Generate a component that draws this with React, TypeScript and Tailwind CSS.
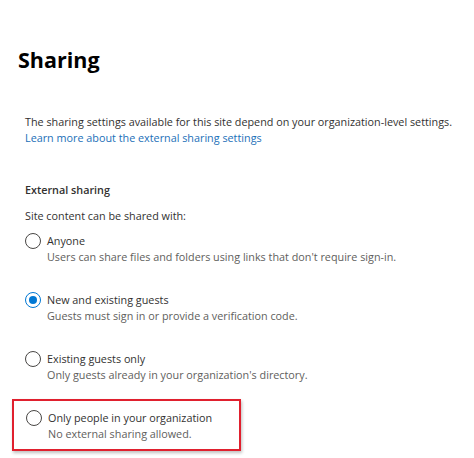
import React from 'react';

type Option = { label: string; desc: string; checked?: boolean };

const options: Option[] = [
    { label: 'Anyone', desc: "Users can share files and folders using links that don't require sign-in." },
    { label: 'New and existing guests', desc: 'Guests must sign in or provide a verification code.', checked: true },
    { label: 'Existing guests only', desc: "Only guests already in your organization's directory." },
];

const Radio: React.FC<{ checked?: boolean }> = ({ checked }) => (
    <div
        className={`w-4 h-4 rounded-full border flex items-center justify-center shrink-0 ${
            checked ? 'border-[#0078d4]' : 'border-[#484644]'
        }`}
    >
        {checked && <div className="w-2 h-2 rounded-full bg-[#0078d4]" />}
    </div>
);

const RadioRow: React.FC<{ option: Option }> = ({ option }) => (
    <div className="flex gap-[6px]">
        <Radio checked={option.checked} />
        <div>
            <div className="text-[#323130] leading-4">{option.label}</div>
            <div className="text-[#605e5c] leading-4">{option.desc}</div>
        </div>
    </div>
);

export default function App() {
    return (
        <div
            className="w-[474px] h-[458px] bg-white overflow-hidden pt-[46px] text-[10.8px]"
            style={{ fontFamily: '"Open Sans", "Noto Sans", sans-serif' }}
        >
            {/* TITLE */}
            <h1 className="ml-[18px] text-[21.5px] leading-[28px] font-bold text-[#000000]">Sharing</h1>

            <div className="pl-[25px]">
                <p className="mt-[40px] leading-4 text-[#323130]">
                    The sharing settings available for this site depend on your organization-level settings.
                    <br />
                    <span className="text-[#1b6fb8]">Learn more about the external sharing settings</span>
                </p>

                <div className="mt-[36px] leading-4 font-semibold text-[#323130]">External sharing</div>
                <div className="mt-[10px] leading-4 text-[#323130]">Site content can be shared with:</div>

                <div className="mt-[9px] flex flex-col gap-[27px]">
                    {options.map((o) => (
                        <RadioRow key={o.label} option={o} />
                    ))}

                    {/* highlighted option */}
                    <div className="-ml-[13px] -mt-[11px] w-[229px] border-2 border-[#e0202e] pl-[12px] pt-[9px] pb-[7px] shadow-[1px_2px_3px_rgba(0,0,0,0.25)]">
                        <RadioRow option={{ label: 'Only people in your organization', desc: 'No external sharing allowed.' }} />
                    </div>
                </div>
            </div>
        </div>
    );
}
